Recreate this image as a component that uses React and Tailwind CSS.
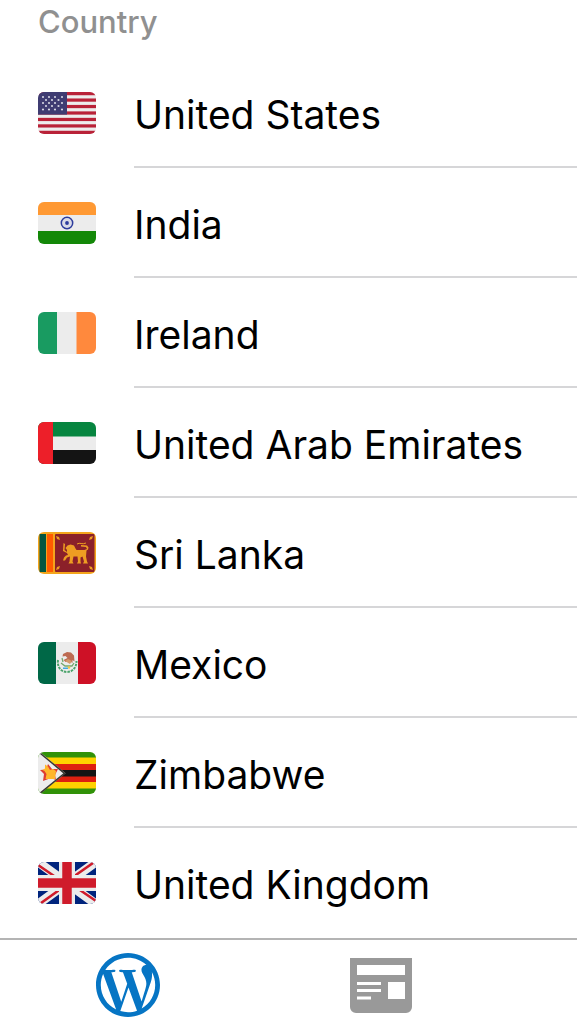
function Flag({ children }) {
  return (
    <svg viewBox="0 0 58 42" className="h-[42px] w-[58px] shrink-0 rounded-md" aria-hidden="true">
      {children}
    </svg>
  )
}

function UnitedStatesFlag() {
  const stripe = 42 / 13
  return (
    <Flag>
      <rect width="58" height="42" fill="#ededed" />
      {[0, 2, 4, 6, 8, 10, 12].map(i => (
        <rect key={i} y={i * stripe} width="58" height={stripe} fill="#b92238" />
      ))}
      <rect width="29" height="22.6" fill="#3f3c72" />
      {[5, 8, 11, 14, 17.5].map((y, row) =>
        (row % 2 === 0 ? [5, 11, 17, 24] : [8, 14, 20.5]).map(x => (
          <circle key={`${x}-${y}`} cx={x} cy={y} r="1.1" fill="#d5d5e2" />
        ))
      )}
    </Flag>
  )
}

function IndiaFlag() {
  return (
    <Flag>
      <rect width="58" height="42" fill="#ececec" />
      <rect width="58" height="13" fill="#ff9933" />
      <rect y="29" width="58" height="13" fill="#138808" />
      <circle cx="29" cy="21" r="5.7" fill="#dadbe8" stroke="#2d3c9d" strokeWidth="1.5" />
      <circle cx="29" cy="21" r="1.9" fill="#2d3c9d" />
    </Flag>
  )
}

function IrelandFlag() {
  return (
    <Flag>
      <rect width="20" height="42" fill="#199b61" />
      <rect x="19" width="20" height="42" fill="#ececec" />
      <rect x="38.5" width="20" height="42" fill="#ff893d" />
    </Flag>
  )
}

function EmiratesFlag() {
  return (
    <Flag>
      <rect width="58" height="42" fill="#ececec" />
      <rect width="58" height="14.5" fill="#078540" />
      <rect y="28" width="58" height="14" fill="#141414" />
      <rect width="15" height="42" fill="#ed1f29" />
    </Flag>
  )
}

function SriLankaFlag() {
  return (
    <Flag>
      <rect width="58" height="42" fill="#f4a51c" />
      <rect x="1.5" y="2" width="6.5" height="38" fill="#055640" />
      <rect x="9" y="2" width="6" height="38" fill="#ff5b00" />
      <rect x="17" y="2" width="39.5" height="38" rx="1" fill="#8b2029" />
      <path
        d="M18 4l3 1 1 3-3-1zM55 4l-3 1-1 3 3-1zM18 38l3-1 1-3-3 1zM55 38l-3-1-1-3 3 1z"
        fill="#ee9d22"
      />
      <path
        d="M25.500 11l1.500 1-.5 6 2.500 2v-2l-1.500-2 2-2.500 3-1 3.500 1 1.500 3 1 1.500h8l2.500-1-1-2-5-.5 0-1.500 6 .5 1.500 2-.5 2-1.500 1-.5 6 1 5 1 2h-5l1-2-1.500-5-2 1 0 4 .5 2h-4l1-2-.5-5-4 0-1 5 1 2h-5l1-2 .5-5-3 1-2 3h-2l1-3 2-2 2-.5-1-2-4-2z"
        fill="#ee9d22"
      />
      <path d="M39 12c3-2 5 1 9-1" fill="none" stroke="#ee9d22" strokeWidth="1" />
    </Flag>
  )
}

function MexicoFlag() {
  return (
    <Flag>
      <rect width="58" height="42" fill="#ececec" />
      <rect width="18" height="42" fill="#006847" />
      <rect x="40" width="18" height="42" fill="#ce1126" />
      <path d="M20 18c-1 7 3 12 9 12s9.500-5 9.500-11" fill="none" stroke="#4ba36b" strokeWidth="2" strokeDasharray="2.5 1" />
      <path d="M23 21l4 3 7 0 2-3M24 16l1 4" fill="none" stroke="#75a86d" strokeWidth="1.3" />
      <path d="M25 12l4-2 4 .5 3 3 .5 6-2-1.500 0 3-3-2-4 1-2-2 4-2-2-2-3 .5z" fill="#bd6b52" />
      <path d="M27 19l3-2 4 2-2 3z" fill="#d29a6b" />
      <path d="M25 25.500h5v1.500h-5z" fill="#40a9de" />
      <circle cx="31" cy="25.5" r="1.3" fill="#f4c646" />
    </Flag>
  )
}

function ZimbabweFlag() {
  return (
    <Flag>
      <rect width="58" height="42" fill="#319208" />
      <rect y="5.5" width="58" height="31" fill="#ffd200" />
      <rect y="12" width="58" height="18" fill="#de2010" />
      <rect y="18" width="58" height="6.5" fill="#141414" />
      <path d="M0 0h2l25.500 21.300L2 42H0z" fill="#ececec" />
      <path d="M2.500 1.500l24 19.800-24 19.500" fill="none" stroke="#3a3a32" strokeWidth="1.5" />
      <path d="M10 12l4 5 6 0-3 6 1 5-5-2-8 3 1-7-4-4 6-.5z" fill="#df3d31" />
      <path d="M7 12.500l3 2 2 3.500 3-1 3 2-1 8H7.500l1-5-2-3-2-1 2.500-1.500z" fill="#ffb62b" />
    </Flag>
  )
}

function UnitedKingdomFlag() {
  return (
    <Flag>
      <rect width="58" height="42" fill="#00247d" />
      <path d="M0 0l58 42M58 0L0 42" stroke="#ececec" strokeWidth="9" />
      <path d="M0 3l22 15M36 24l22 15M55 1L35 15M24 26L3 41" stroke="#cf1b2b" strokeWidth="2.6" />
      <path d="M29 0v42M0 21h58" stroke="#ececec" strokeWidth="16" />
      <path d="M29 0v42M0 21h58" stroke="#cf1b2b" strokeWidth="9.5" />
    </Flag>
  )
}

const COUNTRIES = [
  { name: 'United States', flag: UnitedStatesFlag },
  { name: 'India', flag: IndiaFlag },
  { name: 'Ireland', flag: IrelandFlag },
  { name: 'United Arab Emirates', flag: EmiratesFlag },
  { name: 'Sri Lanka', flag: SriLankaFlag },
  { name: 'Mexico', flag: MexicoFlag },
  { name: 'Zimbabwe', flag: ZimbabweFlag },
  { name: 'United Kingdom', flag: UnitedKingdomFlag },
]

function SitesIcon() {
  return (
    <svg viewBox="2 2 20 20" className="size-16" fill="currentColor" aria-hidden="true">
      <path d="M12 2C6.477 2 2 6.477 2 12s4.477 10 10 10 10-4.477 10-10S17.523 2 12 2zM3.5 12c0-1.232.264-2.402.736-3.46L8.29 19.65C5.456 18.272 3.5 15.365 3.5 12zm8.5 8.5c-.834 0-1.64-.12-2.4-.345l2.55-7.41 2.613 7.157c.017.042.038.08.06.117-.884.31-1.833.48-2.823.48zm1.172-12.485c.512-.027.973-.08.973-.08.458-.055.404-.728-.054-.702 0 0-1.376.108-2.265.108-.835 0-2.24-.107-2.24-.107-.458-.026-.51.674-.053.7 0 0 .434.055.892.082l1.324 3.63-1.86 5.578-3.096-9.208c.512-.027.973-.08.973-.08.458-.055.403-.728-.055-.702 0 0-1.376.108-2.265.108-.16 0-.347-.003-.547-.01C6.418 5.025 9.03 3.5 12 3.5c2.213 0 4.228.846 5.74 2.232-.037-.002-.072-.007-.11-.007-.835 0-1.427.727-1.427 1.51 0 .7.404 1.292.835 1.993.323.566.7 1.293.7 2.344 0 .727-.28 1.572-.646 2.748l-.848 2.833-3.072-9.138zm3.1 11.332l2.597-7.506c.484-1.212.645-2.18.645-3.044 0-.313-.02-.603-.057-.874.664 1.21 1.042 2.6 1.042 4.078 0 3.136-1.7 5.874-4.227 7.347z" />
    </svg>
  )
}

function ReaderIcon() {
  return (
    <svg viewBox="0 0 62 55" className="h-[55px] w-[62px]" fill="currentColor" fillRule="evenodd" aria-hidden="true">
      <path d="M0 0h62v49a6 6 0 0 1-6 6H6a6 6 0 0 1-6-6zM7 7v10h48V7zM7 24v3h24v-3zM7 31v3h24v-3zM7 38.500v3h14v-3zM38 24v17h17V24z" />
    </svg>
  )
}

export default function App() {
  return (
    <div className="flex min-h-screen flex-col bg-white font-['Inter',sans-serif]">
      <main>
        <h2 className="h-[58px] pt-1 pl-[38px] text-[31px] leading-9 font-medium text-[#909090]">Country</h2>
        <ul>
          {COUNTRIES.map(({ name, flag: CountryFlag }, index) => (
            <li key={name}>
              <button type="button" className="flex h-[110px] w-full items-center pl-[38px] text-left">
                <CountryFlag />
                <span
                  className={`ml-[38px] flex h-full flex-1 items-center border-b-2 pt-1 text-[39px] leading-none whitespace-nowrap text-black ${
                    index === COUNTRIES.length - 1 ? 'border-transparent' : 'border-[#d6d6d8]'
                  }`}
                >
                  {name}
                </span>
              </button>
            </li>
          ))}
        </ul>
      </main>

      {/* Tab bar */}
      <nav className="flex flex-1 items-start border-t-2 border-[#b4b4b4] pt-[13px] pl-px">
        <button type="button" aria-label="My Sites" className="flex h-16 w-[44%] items-center justify-center text-[#0675c4]">
          <SitesIcon />
        </button>
        <button type="button" aria-label="Reader" className="flex h-16 w-[44%] items-center justify-center text-[#999999]">
          <ReaderIcon />
        </button>
      </nav>
    </div>
  )
}
